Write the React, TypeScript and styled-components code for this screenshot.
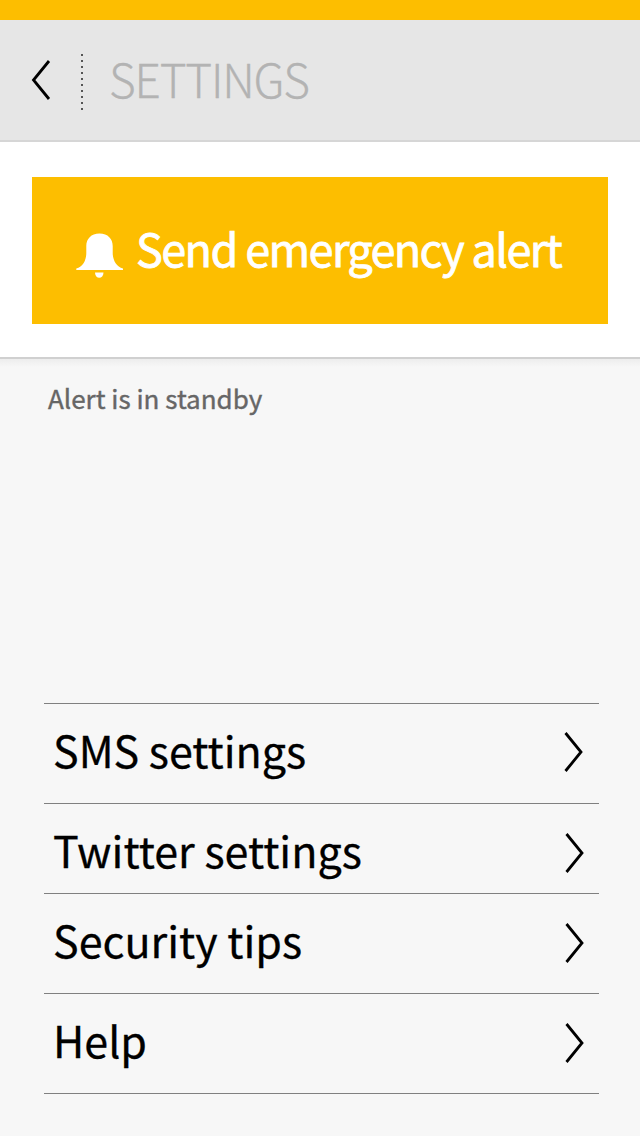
import React from "react";
import styled, { createGlobalStyle } from "styled-components";

const Global = createGlobalStyle`
  * { box-sizing: border-box; }
  body { margin: 0; background: #f7f7f7; font-family: "Noto Sans CJK SC", "Open Sans", sans-serif; }
`;

const Screen = styled.div`
  width: 640px;
  height: 1136px;
  display: flex;
  flex-direction: column;
  background: #f7f7f7;
  overflow: hidden;
`;

const StatusBar = styled.div`
  height: 20px;
  background: #fdbe00;
`;

const Header = styled.header`
  height: 122px;
  display: flex;
  align-items: center;
  padding: 0 31px 0;
  background: #e6e6e6;
  border-bottom: 2px solid #d6d6d6;
`;

const Divider = styled.svg`
  margin: 4px 0 0 30px;
`;

const Title = styled.h1`
  margin: 0 0 4px 26px;
  font-size: 46px;
  line-height: 70px;
  font-weight: 300;
  letter-spacing: -1.2px;
  -webkit-text-stroke: 0.3px #b3b3b3;
  color: #b3b3b3;
`;

const AlertPanel = styled.section`
  height: 217px;
  padding: 35px 32px 0;
  background: #fff;
  border-bottom: 2px solid #d0d0d0;
`;

const AlertButton = styled.button`
  width: 576px;
  height: 147px;
  display: flex;
  align-items: center;
  gap: 12px;
  padding: 0 0 0 44px;
  border: 0;
  background: #fdbe00;
  color: #fff;
  font-family: inherit;
  font-size: 45px;
  line-height: 68px;
  font-weight: 400;
  letter-spacing: -1.6px;
  -webkit-text-stroke: 0.8px #fff;
  white-space: nowrap;
`;

const BellIcon = styled.svg`
  margin-top: 11px;
`;

const AlertLabel = styled.span`
  margin-bottom: 5px;
`;

const StatusArea = styled.section`
  padding: 19px 48px 0;
  background: linear-gradient(#ededed, #f7f7f7 8px);
`;

const Status = styled.p`
  margin: 0;
  font-size: 26px;
  line-height: 40px;
  font-weight: 400;
  -webkit-text-stroke: 0.4px #666;
  color: #666;
`;

const Menu = styled.nav`
  width: 555px;
  margin: auto 0 42px 44px;
  border-top: 1px solid #808080;
`;

const Row = styled.a<{ $height: number }>`
  height: ${(p) => p.$height}px;
  display: flex;
  justify-content: space-between;
  padding: 11px 15px 0 9px;
  border-bottom: 1px solid #808080;
  font-size: 43px;
  line-height: 68px;
  -webkit-text-stroke: 0.3px #000;
  color: #000;
`;

const RowArrow = styled.svg<{ $shift: number }>`
  margin: ${(p) => 17 - p.$shift}px ${(p) => p.$shift}px 0 0;
`;

const items = [
  { label: "SMS settings", height: 100, shift: 1 },
  { label: "Twitter settings", height: 90, shift: 0 },
  { label: "Security tips", height: 100, shift: 0 },
  { label: "Help", height: 100, shift: 0 },
];

export default function App() {
  return (
    <Screen>
      <Global />
      <StatusBar />
      <Header>
        <svg width="20" height="42" viewBox="0 0 20 42" fill="none" stroke="#000" strokeWidth="2.8">
          <path d="M18 2 2.500 21 18 40" />
        </svg>
        <Divider width="2" height="56" viewBox="0 0 2 56">
          <path d="M1 0v56" stroke="#555" strokeWidth="2" strokeDasharray="2 4" />
        </Divider>
        <Title>SETTINGS</Title>
      </Header>
      <AlertPanel>
        <AlertButton>
          <BellIcon width="48" height="46" viewBox="0 0 48 46" fill="#fff">
            <path d="M23.500 0.500C15 0.500 10.300 6 10.300 13v7C10.300 27 7 34 0.300 35.500V37H47v-1.500C40.500 34 36.700 27 36.700 20v-7C36.700 6 32 0.500 23.500 0.500zM19 39.500h8.500c0 7-8.500 7-8.500 0z" />
          </BellIcon>
          <AlertLabel>Send emergency alert</AlertLabel>
        </AlertButton>
      </AlertPanel>
      <StatusArea>
        <Status>Alert is in standby</Status>
      </StatusArea>
      <Menu>
        {items.map((item) => (
          <Row key={item.label} $height={item.height}>
            {item.label}
            <RowArrow $shift={item.shift} width="20" height="42" viewBox="0 0 20 42" fill="none" stroke="#000" strokeWidth="2.8">
              <path d="M2.500 2 18 21 2.500 40" />
            </RowArrow>
          </Row>
        ))}
      </Menu>
    </Screen>
  );
}
